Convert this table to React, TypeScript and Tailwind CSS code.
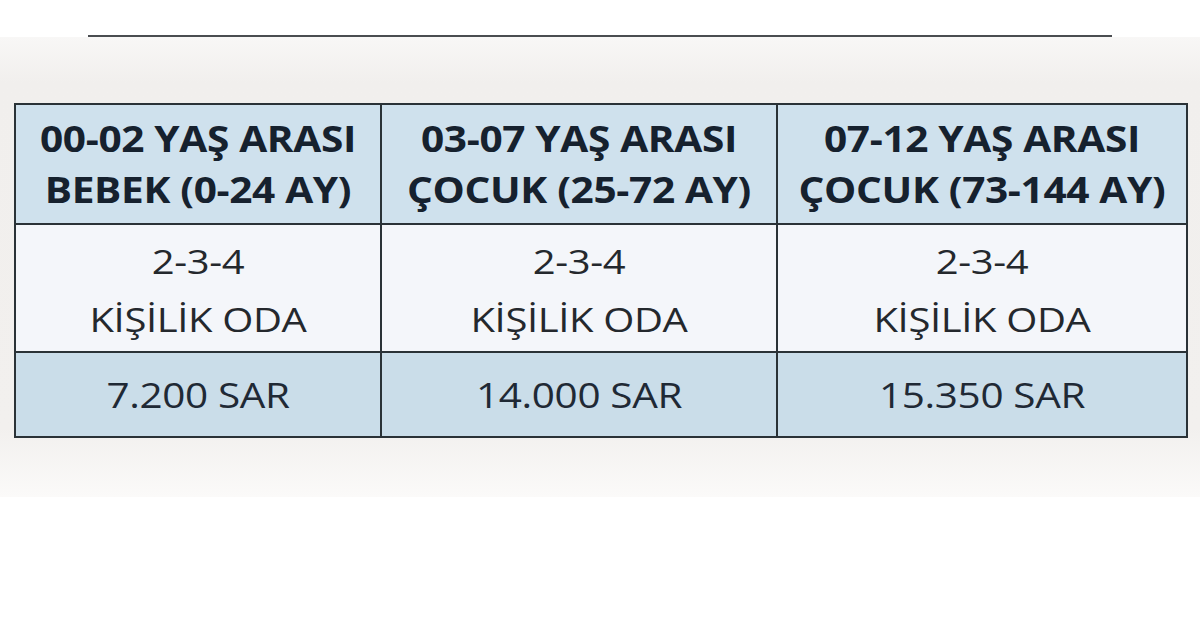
const headers = [
  ['00-02 YAŞ ARASI', 'BEBEK (0-24 AY)'],
  ['03-07 YAŞ ARASI', 'ÇOCUK (25-72 AY)'],
  ['07-12 YAŞ ARASI', 'ÇOCUK (73-144 AY)']
];

const prices = ['7.200 SAR', '14.000 SAR', '15.350 SAR'];

export default function App() {
  return (
    <div className="flex h-[628px] w-[1200px] flex-col bg-white font-['Open_Sans',sans-serif] text-[#16212e]">
      <div className="h-[35px] bg-white" />
      <div className="h-[2px] bg-white px-[88px]">
        <div className="h-full bg-[#4a4d50]" />
      </div>
      <div className="h-[460px] bg-[linear-gradient(180deg,#f8f7f6_0%,#f1efed_10%,#f2f0ee_85%,#fbfaf9_100%)] px-[14px] pt-[66px]">
        <table className="w-[1172px] table-fixed border-collapse border-2 border-[#2a3237]">
          <colgroup>
            <col className="w-[366px]" />
            <col className="w-[396px]" />
            <col className="w-[410px]" />
          </colgroup>
          <tbody>
            <tr className="h-[120px] bg-[#cfe1ed]">
              {headers.map(([a, b]) => (
                <td key={a} className="border-2 border-[#2a3237] text-center align-middle text-[35px] font-bold leading-[51px] tracking-[-0.3px]">
                  <div className="scale-x-[1.16]">{a}</div>
                  <div className="scale-x-[1.16]">{b}</div>
                </td>
              ))}
            </tr>
            <tr className="h-[128px] bg-[#f4f6fa]">
              {headers.map(([a]) => (
                <td key={a} className="border-2 border-[#2a3237] pt-[6px] text-center align-middle text-[32px] leading-[58px] tracking-[-0.3px] text-[#24282d]">
                  <div className="scale-x-[1.25]">2-3-4</div>
                  <div className="scale-x-[1.25]">KİŞİLİK ODA</div>
                </td>
              ))}
            </tr>
            <tr className="h-[85px] bg-[#cadde9]">
              {prices.map((p) => (
                <td key={p} className="border-2 border-[#2a3237] text-center align-middle text-[34px] leading-[40px] tracking-[-0.3px] text-[#1f2935]">
                  <div className="scale-x-[1.19]">{p}</div>
                </td>
              ))}
            </tr>
          </tbody>
        </table>
      </div>
      <div className="flex-1 bg-white" />
    </div>
  );
}
